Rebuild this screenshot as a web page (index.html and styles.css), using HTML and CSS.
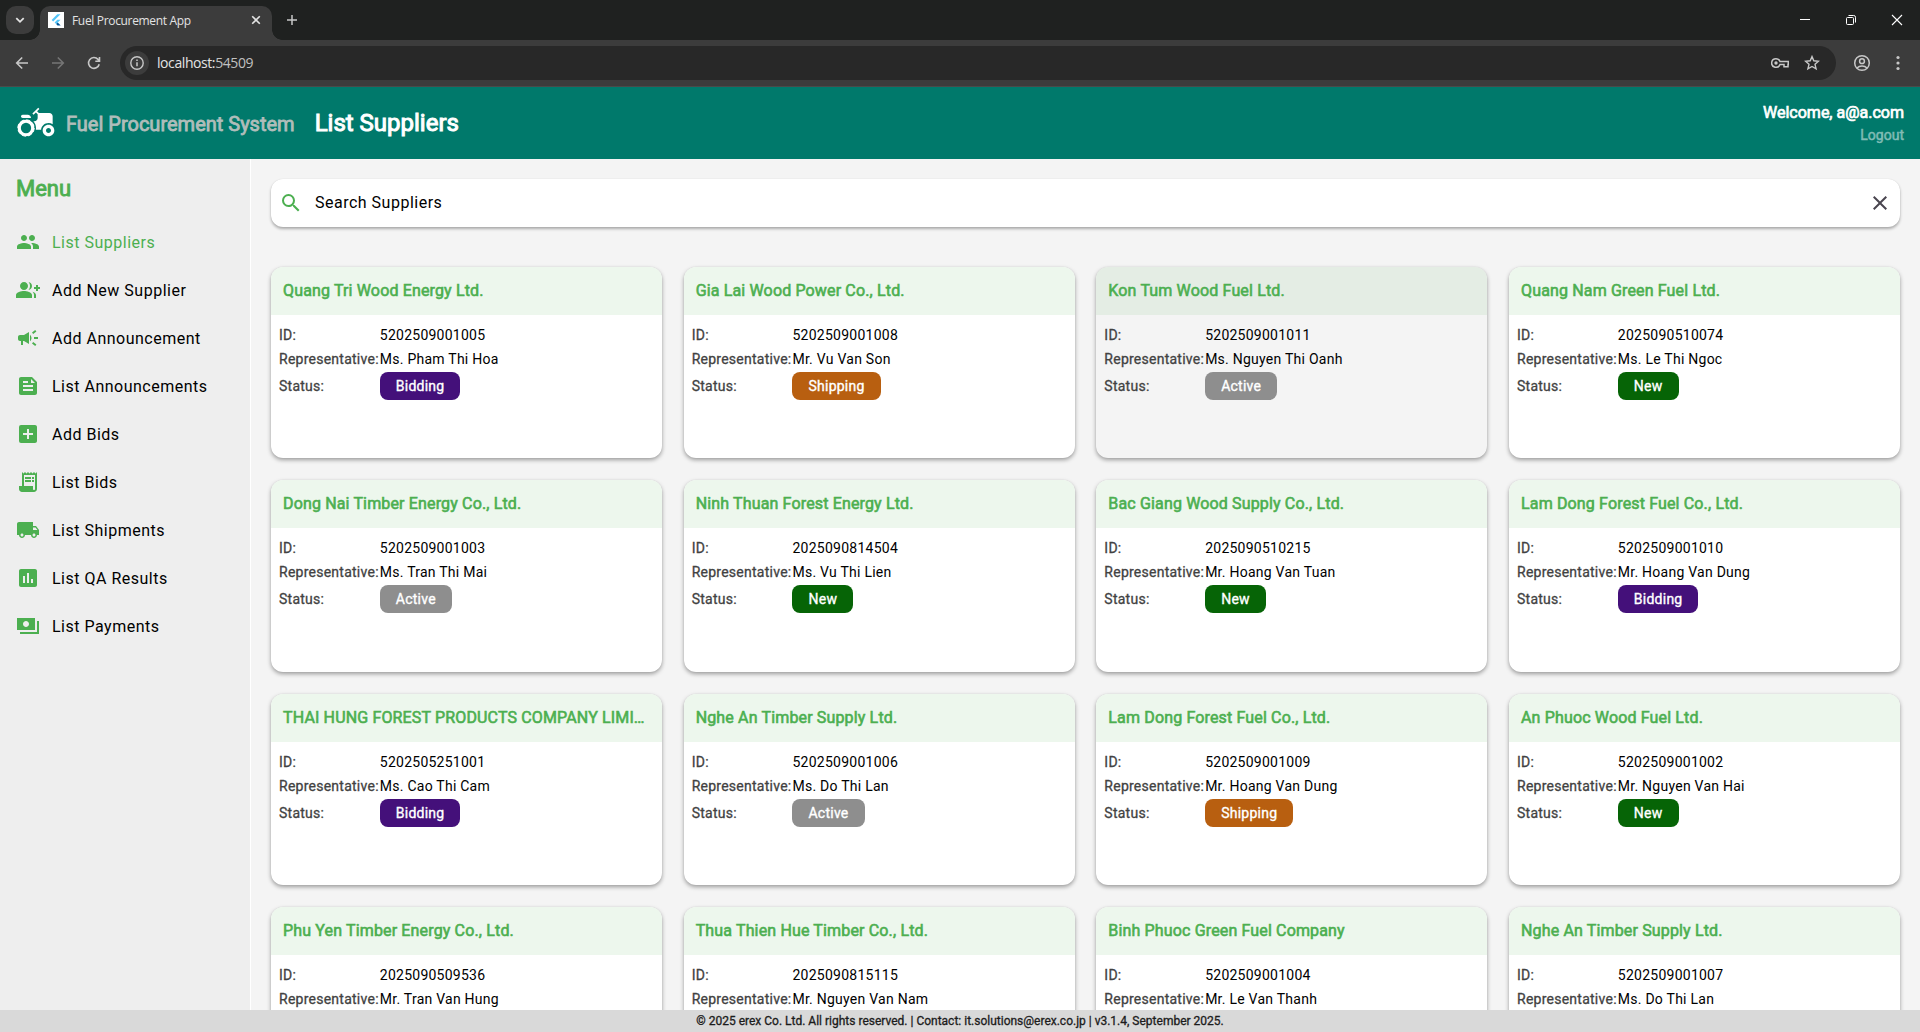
FILE: index.html
```html
<!DOCTYPE html>
<html lang="en">
<head>
<meta charset="utf-8">
<title>Fuel Procurement App</title>
<link rel="stylesheet" href="styles.css">
</head>
<body>
<div class="tabstrip">
  <span class="tab-search"><svg width="10" height="10" viewBox="0 0 10 10"><path d="M1.3 3.2 5 6.8 8.7 3.2" fill="none" stroke="#e3e3e3" stroke-width="1.8"/></svg></span>
  <div class="tab">
    <svg class="favicon" width="16" height="16" viewBox="0 0 16 16"><path fill="#fff" d="M0 0h16v16H0z"/><path fill="#54c5f8" d="M9.3 2.2h3.2L5.2 9.5 3.6 7.9zM9.3 7.7h3.2l-2.7 2.7-1.6 1.6-1.6-1.6z"/><path fill="#01579b" d="m8.2 12 1.6-1.6 2.9 3H9.5z"/></svg>
    <span class="tab-title">Fuel Procurement App</span>
    <svg class="tab-close" width="10" height="10" viewBox="0 0 10 10"><path d="m1.2 1.2 7.6 7.6m0-7.6L1.2 8.8" stroke="#e3e3e3" stroke-width="1.6"/></svg>
  </div>
  <svg class="new-tab" width="12" height="12" viewBox="0 0 12 12"><path d="M6 1v10M1 6h10" stroke="#c7c7c7" stroke-width="1.5"/></svg>
  <div class="window-buttons">
    <svg width="12" height="12" viewBox="0 0 12 12"><path d="M1 5.5h10" stroke="#fff"/></svg>
    <svg width="12" height="12" viewBox="0 0 12 12"><rect x="1.5" y="3.5" width="7" height="7" rx="1" fill="none" stroke="#fff"/><path d="M3.5 1.5h5.2q1.8 0 1.8 1.800V8.500" fill="none" stroke="#fff"/></svg>
    <svg width="12" height="12" viewBox="0 0 12 12"><path d="m1 1 10 10M11 1 1 11" stroke="#fff" stroke-width="1.1"/></svg>
  </div>
</div>
<div class="toolbar">
  <svg class="nav" width="16" height="16" viewBox="0 0 16 16"><path d="M14 8H3M8.200 2.500 2.700 8l5.500 5.500" fill="none" stroke="#c7c7c7" stroke-width="1.600"/></svg>
  <svg class="nav" width="16" height="16" viewBox="0 0 16 16"><path d="M2 8h11M7.800 2.500 13.300 8l-5.500 5.500" fill="none" stroke="#757575" stroke-width="1.600"/></svg>
  <svg class="nav" width="16" height="16" viewBox="0 0 16 16"><path d="M13.200 9.200A5.400 5.400 0 1 1 12 4.400l1 1.200M13.500 2v4.200H9.300" fill="none" stroke="#c7c7c7" stroke-width="1.600"/></svg>
  <div class="omnibox">
    <span class="site-info"><svg width="16" height="16" viewBox="0 0 16 16"><circle cx="8" cy="8" r="6.200" fill="none" stroke="#c7c7c7" stroke-width="1.400"/><path d="M8 7.200v4M8 4.500v1.600" stroke="#c7c7c7" stroke-width="1.500"/></svg></span>
    <span class="url">localhost:<span class="port">54509</span></span>
    <svg class="key" width="18" height="12" viewBox="0 0 18 12"><path d="M5 1.700a4.300 4.300 0 1 0 4 5.800h4v2.300h4V7.500h.3v-3H9A4.300 4.300 0 0 0 5 1.700z" fill="none" stroke="#c7c7c7" stroke-width="1.500"/><circle cx="5" cy="6" r="1.700" fill="#c7c7c7"/></svg>
    <svg class="star" width="16" height="16" viewBox="0 0 16 16"><path d="m8 1.600 1.800 4.200 4.700.4-3.500 3.100 1.100 4.600L8 11.500l-4.100 2.400L5 9.300 1.500 6.200l4.700-.4z" fill="none" stroke="#c7c7c7" stroke-width="1.400"/></svg>
  </div>
  <svg class="profile" width="18" height="18" viewBox="0 0 18 18"><g fill="none" stroke="#c7c7c7" stroke-width="1.500"><circle cx="9" cy="9" r="7.300"/><circle cx="9" cy="7.200" r="2.400"/><path d="M4 14c2.500-2.600 7.500-2.600 10 0"/></g></svg>
  <svg class="kebab" width="4" height="16" viewBox="0 0 4 16"><g fill="#c7c7c7"><circle cx="2" cy="2.500" r="1.600"/><circle cx="2" cy="8" r="1.600"/><circle cx="2" cy="13.500" r="1.600"/></g></svg>
</div>
<header class="appbar">
  <svg class="tractor" width="40" height="40" viewBox="0 0 24 24" fill="#fff"><path d="M19.500 12c.93 0 1.780.28 2.500.76V8c0-1.100-.9-2-2-2h-6.290l-1.060-1.060 1.410-1.410-.71-.71-3.530 3.530.71.710 1.410-1.410L13 6.710V9c0 1.100-.9 2-2 2h-.54c.95 1.060 1.540 2.460 1.540 4 0 .34-.04.67-.09 1h3.140c.25-2.250 2.140-4 4.450-4z"/><path d="M4 9h5c0-1.100-.9-2-2-2H4c-.55 0-1 .45-1 1s.45 1 1 1z"/><path d="M19.500 13c-1.930 0-3.500 1.570-3.500 3.500s1.570 3.500 3.500 3.500 3.500-1.570 3.500-3.500-1.570-3.500-3.500-3.500zm0 5c-.83 0-1.500-.67-1.500-1.500s.67-1.500 1.500-1.500 1.500.67 1.500 1.500-.67 1.500-1.500 1.500z"/><circle cx="6" cy="15" r="4.050" fill="none" stroke="#fff" stroke-width="1.900"/><circle cx="6" cy="15" r="4.900" fill="none" stroke="#fff" stroke-width=".6" stroke-dasharray="2.600 1.250"/></svg>
  <span class="brand">Fuel Procurement System</span>
  <h1>List Suppliers</h1>
  <div class="account"><span class="welcome">Welcome, a@a.com</span><a class="logout">Logout</a></div>
</header>
<div class="body">
  <nav class="sidebar">
    <h2>Menu</h2>
    <ul id="menu"></ul>
  </nav>
  <main>
    <div class="search">
      <svg class="search-icon" width="24" height="24" viewBox="0 0 24 24"><path d="M15.500 14h-.79l-.28-.27A6.471 6.471 0 0 0 16 9.500 6.500 6.500 0 1 0 9.500 16c1.610 0 3.090-.59 4.230-1.570l.27.280v.79l5 4.990L20.490 19l-4.990-5zm-6 0C7.010 14 5 11.990 5 9.500S7.010 5 9.500 5 14 7.010 14 9.500 11.990 14 9.500 14z"/></svg>
      <span class="search-text">Search Suppliers</span>
      <svg class="clear" width="24" height="24" viewBox="0 0 24 24"><path d="M19 6.410 17.590 5 12 10.590 6.410 5 5 6.410 10.590 12 5 17.590 6.410 19 12 13.410 17.590 19 19 17.590 13.410 12z"/></svg>
    </div>
    <div class="grid" id="grid"></div>
  </main>
</div>
<footer>© 2025 erex Co. Ltd. All rights reserved. | Contact: it.solutions@erex.co.jp | v3.1.4, September 2025.</footer>
<script src="app.js"></script>
</body>
</html>
```
FILE: styles.css
```css
* { box-sizing: border-box; }
body { margin: 0; height: 1032px; overflow: hidden; display: flex; flex-direction: column; background: #f4f4f4; font-family: Roboto, "Liberation Sans", sans-serif; color: #000; }
svg { display: block; flex: none; }
h1, h2, h3, ul { margin: 0; padding: 0; font-weight: 400; list-style: none; }

.tabstrip { flex: none; height: 40px; background: #1f2120; display: flex; align-items: flex-start; padding: 6px 17px 0 6px; }
.tab-search { width: 28px; height: 28px; border-radius: 10px; background: #3c3c3c; display: grid; place-items: center; }
.tab { position: relative; margin-left: 6px; width: 232px; height: 34px; padding: 6px 11px 0 8px; border-radius: 10px 10px 0 0; background: #3c3c3c; display: flex; }
.tab::before, .tab::after { content: ""; position: absolute; bottom: 0; width: 10px; height: 10px; }
.tab::before { left: -10px; background: radial-gradient(circle at 0 0, transparent 9.5px, #3c3c3c 10px); }
.tab::after { right: -10px; background: radial-gradient(circle at 100% 0, transparent 9.5px, #3c3c3c 10px); }
.tab-title { flex: 1; margin-left: 8px; font: 12px/17px "Open Sans", "Noto Sans", sans-serif; letter-spacing: -0.33px; color: #e3e3e3; white-space: nowrap; }
.tab-close { margin-top: 3px; }
.new-tab { margin: 8px 0 0 14px; }
.window-buttons { margin: 8px 0 0 auto; display: flex; gap: 34px; }

.toolbar { flex: none; height: 47px; background: #3c3c3c; display: flex; align-items: center; padding: 0 20px 1px 14px; border-bottom: 1px solid #4a4a4a; }
.nav { margin-right: 20px; }
.omnibox { flex: 1; height: 34px; margin-left: -2px; border-radius: 17px; background: #282828; display: flex; align-items: center; padding: 0 16px 0 5px; }
.site-info { width: 24px; height: 24px; border-radius: 50%; background: #3c3c3c; display: grid; place-items: center; }
.url { flex: 1; margin-left: 8px; font: 14px/20px "Open Sans", "Noto Sans", sans-serif; letter-spacing: -0.42px; color: #e3e3e3; }
.port { color: #c0c0c0; }
.star { margin-left: 15px; }
.profile { margin-left: 17px; }
.kebab { margin-left: 25px; }

.appbar { flex: none; height: 72px; background: #00796b; display: flex; align-items: center; padding: 0 16px; color: #fff; }
.brand { margin-left: 10px; padding-top: 2px; font-size: 20px; color: #b0bdba; -webkit-text-stroke: .8px; }
h1 { margin-left: 20px; font-size: 24px; -webkit-text-stroke: 1px; }
.account { margin-left: auto; text-align: right; display: flex; flex-direction: column; }
.welcome { font-size: 16px; line-height: 23px; -webkit-text-stroke: .7px; }
.logout { font-size: 14px; line-height: 22px; color: #80bcb5; -webkit-text-stroke: .5px; }

.body { flex: 1; min-height: 0; display: flex; }
.sidebar { flex: none; width: 251px; background: #eee; border-right: 1px solid #fff; padding: 16px; }
h2 { font-size: 22px; line-height: 28px; color: #4caf50; -webkit-text-stroke: .9px; }
.sidebar ul { margin-top: 15px; }
.sidebar li { height: 48px; display: flex; align-items: center; font-size: 16px; letter-spacing: .5px; }
.sidebar li svg { margin-right: 12px; fill: #4caf50; }
.sidebar li.active { color: #4caf50; }

main { flex: 1; min-width: 0; padding: 20px 20px 0; overflow: hidden; }
.search { height: 48px; border-radius: 12px; background: #fff; display: flex; align-items: center; padding: 0 8px; box-shadow: 0 2px 3px rgba(0,0,0,.3), 0 0 1px rgba(0,0,0,.12); }
.search-icon { fill: #4caf50; }
.search-text { flex: 1; margin-left: 12px; padding-bottom: 2px; font-size: 16px; letter-spacing: .5px; }
.clear { fill: #49454f; }
.grid { margin-top: 40px; display: grid; grid-template-columns: repeat(4, 1fr); gap: 22px 21.7px; }
.card { height: 191.300px; min-width: 0; border-radius: 12px; overflow: hidden; background: #fff; box-shadow: 0 2px 4px rgba(0,0,0,.36), 0 0 1px rgba(0,0,0,.12); }
.card h3 { height: 48px; padding: 0 12px; line-height: 47px; background: #edf7ed; color: #4caf50; font-size: 16px; letter-spacing: .15px; -webkit-text-stroke: .6px; overflow: hidden; text-overflow: ellipsis; white-space: nowrap; }
.card.hover { background: #f4f4f4; }
.card.hover h3 { background: #e4ede4; }
.fields { padding: 8px 8px 0; display: grid; grid-template-columns: 100.800px 1fr; grid-template-rows: 24px 24px 30px; align-items: center; font-size: 14px; letter-spacing: .25px; white-space: nowrap; }
.label { color: #424242; -webkit-text-stroke: .3px; }
.badge { justify-self: start; height: 28px; padding: 0 16px; border-radius: 8px; line-height: 28px; color: #fff; -webkit-text-stroke: .35px; }
.bidding { background: #44107a; }
.shipping { background: #b85f10; }
.active-status { background: #8e8e8e; }
.new { background: #066406; }

footer { position: relative; flex: none; height: 22px; background: #d9d9d9; color: #1c1c1c; text-align: center; font-size: 12px; line-height: 22px; -webkit-text-stroke: .3px; }
```
FILE: app.js
```js
const menu = [
  ["List Suppliers", "M16 11c1.660 0 2.990-1.340 2.990-3S17.660 5 16 5c-1.660 0-3 1.340-3 3s1.340 3 3 3zm-8 0c1.660 0 2.990-1.340 2.990-3S9.660 5 8 5C6.340 5 5 6.340 5 8s1.340 3 3 3zm0 2c-2.330 0-7 1.170-7 3.500V19h14v-2.500c0-2.330-4.670-3.500-7-3.500zm8 0c-.29 0-.62.020-.97.050 1.160.84 1.970 1.970 1.970 3.450V19h6v-2.500c0-2.330-4.670-3.500-7-3.500z"],
  ["Add New Supplier", "M22 9V7h-2v2h-2v2h2v2h2v-2h2V9zM8 12c2.210 0 4-1.790 4-4s-1.790-4-4-4-4 1.790-4 4 1.790 4 4 4zm0 1c-2.670 0-8 1.340-8 4v3h16v-3c0-2.660-5.330-4-8-4zM12.510 4.050C13.430 5.110 14 6.490 14 8s-.57 2.890-1.490 3.950C14.470 11.700 16 10.040 16 8s-1.530-3.700-3.490-3.950zM16.530 13.830C17.420 14.660 18 15.700 18 17v3h2v-3c0-1.450-1.590-2.510-3.470-3.170z"],
  ["Add Announcement", "M18 11v2h4v-2h-4zM16 17.610c.96.710 2.210 1.650 3.200 2.390.4-.53.8-1.070 1.200-1.600-.99-.74-2.240-1.680-3.200-2.400-.4.540-.8 1.080-1.200 1.610zM20.400 5.600c-.4-.53-.8-1.070-1.200-1.600-.99.740-2.240 1.680-3.200 2.400.4.530.8 1.070 1.200 1.600.96-.72 2.210-1.650 3.200-2.400zM4 9c-1.100 0-2 .9-2 2v2c0 1.100.9 2 2 2h1v4h2v-4h1l5 3V6L8 9H4zM15.500 12c0-1.330-.58-2.530-1.500-3.350v6.690c.92-.81 1.500-2.010 1.500-3.340z"],
  ["List Announcements", "M16 3H5c-1.100 0-2 .9-2 2v14c0 1.100.9 2 2 2h14c1.100 0 2-.9 2-2V8l-5-5zM7 7h5v2H7V7zm10 10H7v-2h10v2zm0-4H7v-2h10v2zm-2-4V5l4 4h-4z"],
  ["Add Bids", "M19 3H5a2 2 0 0 0-2 2v14a2 2 0 0 0 2 2h14c1.100 0 2-.9 2-2V5c0-1.100-.9-2-2-2zm-2 10h-4v4h-2v-4H7v-2h4V7h2v4h4v2z"],
  ["List Bids", "M19.500 3.500 18 2l-1.500 1.500L15 2l-1.500 1.500L12 2l-1.500 1.500L9 2 7.500 3.500 6 2v14H3v3c0 1.660 1.340 3 3 3h12c1.660 0 3-1.340 3-3V2l-1.500 1.500zM19 19c0 .55-.45 1-1 1s-1-.45-1-1v-3H8V5h11v14zM9 7h6v2H9zM16 7h2v2h-2zM9 10h6v2H9zM16 10h2v2h-2z"],
  ["List Shipments", "M20 8h-3V4H3c-1.100 0-2 .9-2 2v11h2c0 1.660 1.340 3 3 3s3-1.340 3-3h6c0 1.660 1.340 3 3 3s3-1.340 3-3h2v-5l-3-4zM6 18.500c-.83 0-1.500-.67-1.500-1.500s.67-1.500 1.500-1.500 1.500.67 1.500 1.500-.67 1.500-1.500 1.500zm13.500-9 1.960 2.500H17V9.500h2.500zm-1.500 9c-.83 0-1.500-.67-1.500-1.500s.67-1.500 1.500-1.500 1.500.67 1.500 1.500-.67 1.500-1.500 1.500z"],
  ["List QA Results", "M19 3H5c-1.100 0-2 .9-2 2v14c0 1.100.9 2 2 2h14c1.100 0 2-.9 2-2V5c0-1.100-.9-2-2-2zM9 17H7v-7h2v7zm4 0h-2V7h2v10zm4 0h-2v-4h2v4z"],
  ["List Payments", "M19 16V4H1v12zm-9-3c-1.660 0-3-1.340-3-3s1.340-3 3-3 3 1.340 3 3-1.340 3-3 3zm13-6v13H4v-2h17V7h2z"]
];
const suppliers = [
  ["Quang Tri Wood Energy Ltd.", "5202509001005", "Ms. Pham Thi Hoa", "Bidding"],
  ["Gia Lai Wood Power Co., Ltd.", "5202509001008", "Mr. Vu Van Son", "Shipping"],
  ["Kon Tum Wood Fuel Ltd.", "5202509001011", "Ms. Nguyen Thi Oanh", "Active"],
  ["Quang Nam Green Fuel Ltd.", "2025090510074", "Ms. Le Thi Ngoc", "New"],
  ["Dong Nai Timber Energy Co., Ltd.", "5202509001003", "Ms. Tran Thi Mai", "Active"],
  ["Ninh Thuan Forest Energy Ltd.", "2025090814504", "Ms. Vu Thi Lien", "New"],
  ["Bac Giang Wood Supply Co., Ltd.", "2025090510215", "Mr. Hoang Van Tuan", "New"],
  ["Lam Dong Forest Fuel Co., Ltd.", "5202509001010", "Mr. Hoang Van Dung", "Bidding"],
  ["THAI HUNG FOREST PRODUCTS COMPANY LIMITED", "5202505251001", "Ms. Cao Thi Cam", "Bidding"],
  ["Nghe An Timber Supply Ltd.", "5202509001006", "Ms. Do Thi Lan", "Active"],
  ["Lam Dong Forest Fuel Co., Ltd.", "5202509001009", "Mr. Hoang Van Dung", "Shipping"],
  ["An Phuoc Wood Fuel Ltd.", "5202509001002", "Mr. Nguyen Van Hai", "New"],
  ["Phu Yen Timber Energy Co., Ltd.", "2025090509536", "Mr. Tran Van Hung"],
  ["Thua Thien Hue Timber Co., Ltd.", "2025090815115", "Mr. Nguyen Van Nam"],
  ["Binh Phuoc Green Fuel Company", "5202509001004", "Mr. Le Van Thanh"],
  ["Nghe An Timber Supply Ltd.", "5202509001007", "Ms. Do Thi Lan"]
];
const statusClass = { Bidding: "bidding", Shipping: "shipping", Active: "active-status", New: "new" };

document.getElementById("menu").innerHTML = menu.map(([label, path], i) =>
  `<li class="${i === 0 ? "active" : ""}"><svg width="24" height="24" viewBox="0 0 24 24"><path fill-rule="evenodd" d="${path}"/></svg>${label}</li>`).join("");

const statusRow = status => status
  ? `<span class="label">Status:</span><span class="badge ${statusClass[status]}">${status}</span>`
  : "";

document.getElementById("grid").innerHTML = suppliers.map(([name, id, rep, status], i) =>
  `<article class="card${i === 2 ? " hover" : ""}"><h3>${name}</h3><div class="fields">
  <span class="label">ID:</span><span>${id}</span>
  <span class="label">Representative:</span><span>${rep}</span>
  ${statusRow(status)}</div></article>`).join("");
```
